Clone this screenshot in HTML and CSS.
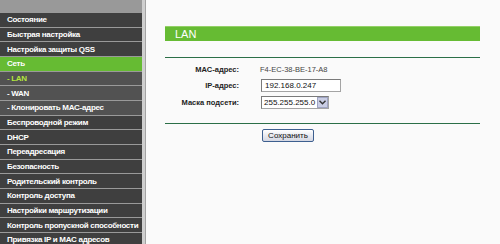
FILE: index.html
```html
<!DOCTYPE html>
<html lang="ru">
<head>
<meta charset="utf-8">
<title>LAN</title>
<link rel="stylesheet" href="styles.css">
</head>
<body>
<div class="page">
  <nav class="sidebar">
    <div class="side-head"></div>
    <ul class="menu">
      <li class="item">Состояние</li>
      <li class="item">Быстрая настройка</li>
      <li class="item">Настройка защиты QSS</li>
      <li class="item active">Сеть</li>
      <li class="item sub current">- LAN</li>
      <li class="item sub">- WAN</li>
      <li class="item sub">- Клонировать MAC-адрес</li>
      <li class="item">Беспроводной режим</li>
      <li class="item">DHCP</li>
      <li class="item">Переадресация</li>
      <li class="item">Безопасность</li>
      <li class="item">Родительский контроль</li>
      <li class="item">Контроль доступа</li>
      <li class="item">Настройки маршрутизации</li>
      <li class="item">Контроль пропускной способности</li>
      <li class="item">Привязка IP и MAC адресов</li>
    </ul>
  </nav>
  <main class="main">
    <section class="panel">
      <div class="titlebar">LAN</div>
      <div class="rule"></div>
      <div class="form">
        <div class="label">MAC-адрес:</div>
        <div class="value">F4-EC-38-BE-17-A8</div>
        <div class="label">IP-адрес:</div>
        <div class="value"><div class="input">192.168.0.247</div></div>
        <div class="label">Маска подсети:</div>
        <div class="value">
          <div class="select">
            <span class="select-text">255.255.255.0</span>
            <span class="select-btn"><svg width="7" height="5" viewBox="0 0 7 5"><path d="M0.5 0.8 L3.5 3.8 L6.5 0.8" fill="none" stroke="#333" stroke-width="1.4"/></svg></span>
          </div>
        </div>
      </div>
      <div class="rule rule2"></div>
      <div class="actions"><button class="btn" type="button">Сохранить</button></div>
    </section>
  </main>
</div>
</body>
</html>
```
FILE: styles.css
```css
html, body {
  margin: 0;
  padding: 0;
  height: 100%;
  overflow: hidden;
}
body {
  font-family: "Liberation Sans", Arial, sans-serif;
  background: #fafafa;
}
.page {
  display: flex;
  height: 244px;
}
.sidebar {
  width: 142px;
  flex: none;
  background: #3f3f3f;
  border-right: 3px solid #cfcfcf;
}
.side-head {
  height: 12px;
  background: #999999;
}
.menu {
  list-style: none;
  margin: 0;
  padding: 0;
  display: grid;
  grid-auto-rows: 14.667px;
}
.item {
  box-sizing: border-box;
  border-top: 1px solid #9a9a9a;
  background: #3f3f3f;
  color: #ffffff;
  font-weight: bold;
  font-size: 8px;
  letter-spacing: -0.3px;
  padding-left: 7px;
  display: flex;
  align-items: center;
  white-space: nowrap;
  overflow: hidden;
}
.item.active {
  background: #66bb33;
}
.item.sub {
  background: #525252;
}
.item.current {
  color: #b2e63c;
}
.main {
  flex: 1;
  border-left: 1px solid #a3a3a3;
  background: #fafafa;
  padding: 26px 0 0 19px;
}
.panel {
  width: 315px;
}
.titlebar {
  box-sizing: border-box;
  height: 15px;
  background: #66bb33;
  border-top: 1px solid #93d066;
  color: #ffffff;
  font-size: 11px;
  line-height: 14px;
  padding-left: 10px;
}
.rule {
  height: 1px;
  background: #2b6f47;
  margin-top: 16px;
}
.form {
  display: grid;
  grid-template-columns: 74px 1fr;
  column-gap: 21px;
  grid-template-rows: 11px 13px 13px;
  row-gap: 4px;
  margin-top: 6px;
  font-size: 7.5px;
  align-items: center;
}
.label {
  text-align: right;
  font-weight: bold;
  color: #222222;
  white-space: nowrap;
}
.value {
  color: #444444;
  white-space: nowrap;
  display: flex;
  align-items: center;
}
.input {
  box-sizing: border-box;
  width: 80px;
  height: 13px;
  border: 1px solid #a4a4a4;
  border-top-color: #7a7a7a;
  border-left-color: #7a7a7a;
  background: #ffffff;
  font-size: 8px;
  line-height: 11px;
  padding-left: 3px;
  margin-left: 1px;
  color: #111111;
}
.select {
  box-sizing: border-box;
  display: flex;
  align-items: stretch;
  height: 13px;
  border: 1px solid #a4a4a4;
  border-top-color: #7a7a7a;
  border-left-color: #7a7a7a;
  background: #ffffff;
  margin-left: 1px;
}
.select-text {
  font-size: 8px;
  line-height: 11px;
  padding: 0 2px 0 2px;
  color: #111111;
}
.select-btn {
  box-sizing: border-box;
  width: 11px;
  background: #c9cde4;
  border: 1px solid #9fa4c2;
  display: flex;
  align-items: center;
  justify-content: center;
}
.rule2 {
  margin-top: 14px;
}
.actions {
  margin-top: 5px;
  padding-left: 97px;
}
.btn {
  box-sizing: border-box;
  display: block;
  width: 52px;
  height: 13px;
  padding: 0;
  font-family: "Liberation Sans", Arial, sans-serif;
  font-size: 8px;
  line-height: 11px;
  color: #111111;
  background: linear-gradient(#ffffff, #e4e6ee 60%, #d4d7e2);
  border: 1px solid #3d5f8f;
  border-radius: 2px;
}
```
